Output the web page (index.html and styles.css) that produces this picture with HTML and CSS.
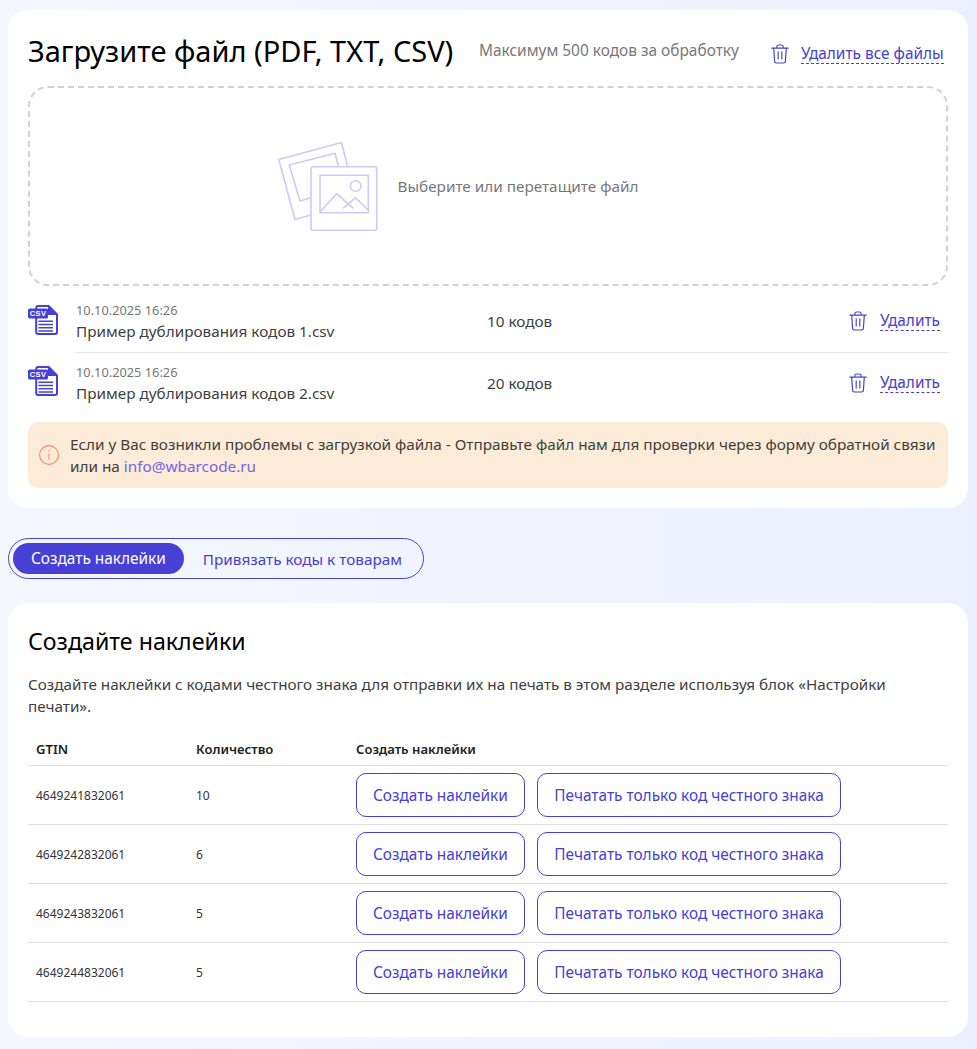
FILE: index.html
```html
<!DOCTYPE html>
<html lang="ru">
<head>
    <meta charset="UTF-8">
    <meta name="viewport" content="width=device-width, initial-scale=1.0">
    <title>Загрузка файла</title>
    <link rel="stylesheet" href="styles.css">
</head>
<body>
    <svg class="sprite" width="0" height="0" aria-hidden="true">
        <symbol id="trash" viewBox="0 0 20 22">
            <path d="M1 4.500h18M6.500 4.500V3a2 2 0 0 1 2-2h3a2 2 0 0 1 2 2v1.500M3 4.500l1 14.700a2 2 0 0 0 2 1.800h8a2 2 0 0 0 2-1.800l1-14.700M8 8.500v8M12 8.500v8" fill="none" stroke="currentColor" stroke-width="1.300" stroke-linecap="round" stroke-linejoin="round"/>
        </symbol>
        <symbol id="csv-doc" viewBox="0 0 30 30">
            <path d="M8.200 4V3a2 2 0 0 1 2-2h10.500l8.300 8.300V27a2 2 0 0 1-2 2H10.200a2 2 0 0 1-2-2V13" fill="none" stroke="currentColor" stroke-width="2"/>
            <path d="M20.500 1.500v8h8" fill="currentColor" stroke="currentColor" stroke-width="1.200"/>
            <rect x="0" y="3.500" width="20" height="10" rx="1.500" fill="currentColor"/>
            <path d="M10.500 16.200h14.500M10.500 19.500h14.500M10.500 22.800h14.500M10.500 26h14.500" stroke="currentColor" stroke-width="1.400"/>
        </symbol>
    </svg>

    <section class="card upload">
        <div class="upload-head">
            <h1>Загрузите файл (PDF, TXT, CSV)</h1>
            <span class="limit">Максимум 500 кодов за обработку</span>
            <a class="remove remove-all" href="#">
                <svg class="trash-icon"><use href="#trash"/></svg>
                <span>Удалить все файлы</span>
            </a>
        </div>

        <div class="dropzone">
            <svg class="drop-icon" width="100" height="91" viewBox="0 0 100 91" fill="none" stroke="#cbcbfa" stroke-width="1.600" stroke-linejoin="round">
                <path d="M33 74 L17 78.500 L0.800 18.500 L63.500 1.500 L69.500 25"/>
                <path d="M33 56.700 L22 60 L11.300 24 L57 12.300 L60.300 25"/>
                <rect x="33" y="25.700" width="65.700" height="63.600" rx="2"/>
                <rect x="42" y="34.300" width="48.300" height="37.400"/>
                <circle cx="77.700" cy="45" r="5.300"/>
                <path d="M42 71 L58.700 52.700 L75.300 67.300 M65 67.300 L77.700 56.700 L90.300 69.300"/>
            </svg>
            <span>Выберите или перетащите файл</span>
        </div>

        <div class="file-row">
            <svg class="csv-icon" viewBox="0 0 30 30"><use href="#csv-doc"/><text class="csv-label" x="10" y="11.300">CSV</text></svg>
            <div class="file-info">
                <div class="file-date">10.10.2025 16:26</div>
                <div class="file-name">Пример дублирования кодов 1.csv</div>
            </div>
            <div class="file-count">10 кодов</div>
            <a class="remove" href="#">
                <svg class="trash-icon"><use href="#trash"/></svg>
                <span>Удалить</span>
            </a>
        </div>
        <div class="file-row">
            <svg class="csv-icon" viewBox="0 0 30 30"><use href="#csv-doc"/><text class="csv-label" x="10" y="11.300">CSV</text></svg>
            <div class="file-info">
                <div class="file-date">10.10.2025 16:26</div>
                <div class="file-name">Пример дублирования кодов 2.csv</div>
            </div>
            <div class="file-count">20 кодов</div>
            <a class="remove" href="#">
                <svg class="trash-icon"><use href="#trash"/></svg>
                <span>Удалить</span>
            </a>
        </div>

        <div class="notice">
            <svg class="notice-icon" width="20" height="20" viewBox="0 0 20 20" fill="none" stroke="#f58a6c" stroke-width="1.100">
                <circle cx="10" cy="10" r="9.400"/>
                <path d="M10 8.500v6M10 5v1.500"/>
            </svg>
            <p>Если у Вас возникли проблемы с загрузкой файла - Отправьте файл нам для проверки через форму обратной связи или на <a href="#">info@wbarcode.ru</a></p>
        </div>
    </section>

    <div class="tabs">
        <button class="tab tab-active">Создать наклейки</button>
        <button class="tab">Привязать коды к товарам</button>
    </div>

    <section class="card stickers">
        <h2>Создайте наклейки</h2>
        <p class="lead">Создайте наклейки с кодами честного знака для отправки их на печать в этом разделе используя блок «Настройки печати».</p>
        <table>
            <thead>
                <tr><th>GTIN</th><th>Количество</th><th>Создать наклейки</th></tr>
            </thead>
            <tbody>
                <tr>
                    <td>4649241832061</td><td>10</td>
                    <td><button class="btn">Создать наклейки</button><button class="btn">Печатать только код честного знака</button></td>
                </tr>
                <tr>
                    <td>4649242832061</td><td>6</td>
                    <td><button class="btn">Создать наклейки</button><button class="btn">Печатать только код честного знака</button></td>
                </tr>
                <tr>
                    <td>4649243832061</td><td>5</td>
                    <td><button class="btn">Создать наклейки</button><button class="btn">Печатать только код честного знака</button></td>
                </tr>
                <tr>
                    <td>4649244832061</td><td>5</td>
                    <td><button class="btn">Создать наклейки</button><button class="btn">Печатать только код честного знака</button></td>
                </tr>
            </tbody>
        </table>
    </section>
</body>
</html>
```

FILE: styles.css
```css
* {
    box-sizing: border-box;
}
body {
    margin: 0;
    padding: 10px 9px 12px 8px;
    font-family: "Noto Sans", Arial, sans-serif;
    font-size: 15.3px;
    color: #404040;
    background-color: #eff1fe;
    background-image: linear-gradient(90deg, #f5f7ff, #eceffe);
}
.sprite {
    position: absolute;
}
.card {
    background: #fff;
    border-radius: 20px;
    padding: 20px;
}
.upload {
    height: 498px;
}
.upload-head {
    display: flex;
    height: 56px;
    align-items: flex-start;
}
h1 {
    margin: 0;
    width: 451px;
    font-size: 29px;
    line-height: 42px;
    font-weight: 400;
    color: #000;
}
.limit {
    color: #777;
    font-size: 15.450px;
    line-height: 41px;
    width: 292px;
}
.remove {
    display: flex;
    align-items: center;
    gap: 13px;
    color: #4640d4;
    font-size: 15.400px;
    text-decoration: none;
}
.remove span {
    border-bottom: 1px dashed #4640d4;
    line-height: 19px;
}
.remove-all {
    gap: 12px;
    margin-top: 14px;
}
.trash-icon {
    width: 18px;
    height: 20px;
}
.dropzone {
    height: 200px;
    border: 2px dashed #ced2dc;
    border-radius: 20px;
    display: flex;
    align-items: center;
    justify-content: center;
    gap: 20px;
    padding-right: 60px;
    color: #777;
}
.file-row {
    display: flex;
    align-items: center;
    height: 62px;
}
.dropzone + .file-row {
    margin-top: 4px;
}
.file-row + .file-row {
    border-top: 1px solid #e6e6ec;
    margin-left: 48px;
    padding-bottom: 2px;
}
.file-row + .file-row .csv-icon {
    margin-left: -48px;
}
.csv-icon {
    flex: none;
    width: 30px;
    height: 30px;
    margin-top: -3px;
    margin-right: 18px;
    color: #4640d4;
}
.csv-label {
    font-family: "Liberation Sans", Arial, sans-serif;
    font-size: 7.500px;
    font-weight: 700;
    letter-spacing: 0.4px;
    fill: #fff;
    text-anchor: middle;
}
.file-info {
    width: 411px;
    padding-top: 3px;
}
.file-date {
    font-size: 12.800px;
    color: #777;
    line-height: 18px;
}
.file-name {
    line-height: 25px;
}
.file-count {
    flex: 1;
}
.file-row .remove {
    margin-right: 8px;
}
.notice {
    display: flex;
    align-items: center;
    gap: 11px;
    background: #fcebd7;
    border-radius: 10px;
    padding: 11px;
    margin-top: 8px;
    height: 66px;
}
.notice p {
    margin: 0;
    line-height: 22px;
}
.notice a {
    color: #7564f0;
    text-decoration: none;
}
.notice-icon {
    flex: none;
}
.tabs {
    display: inline-flex;
    margin-top: 30px;
    padding: 4px;
    border: 1px solid #4640d4;
    border-radius: 21px;
    height: 41px;
    width: 416px;
    gap: 1px;
}
.tab {
    font: inherit;
    white-space: nowrap;
    border: 0;
    background: none;
    color: #4640d4;
    border-radius: 16px;
    padding: 0 18px;
    cursor: pointer;
}
.tab-active {
    background: #4640d4;
    color: #fff;
    font-size: 15.400px;
}
.stickers {
    margin-top: 24px;
    height: 434px;
}
h2 {
    margin: 0;
    font-size: 23.200px;
    font-weight: 400;
    line-height: 36px;
    color: #000;
}
.lead {
    margin: 14px 0 0;
    max-width: 880px;
    font-size: 15.250px;
    line-height: 22px;
}
table {
    width: 100%;
    border-collapse: collapse;
    margin-top: 16px;
}
th {
    text-align: left;
    font-size: 13.100px;
    font-weight: 600;
    color: #222;
    height: 32px;
    padding: 0 8px;
    border-bottom: 1px solid #e0e0e6;
}
td {
    font-size: 12px;
    color: #333;
    height: 59px;
    padding: 0 8px;
    border-bottom: 1px solid #e0e0e6;
}
td:nth-child(-n+2) {
    padding-top: 2px;
}
th:nth-child(1), td:nth-child(1) {
    width: 160px;
}
th:nth-child(2), td:nth-child(2) {
    width: 160px;
}
.btn {
    font: inherit;
    font-size: 15.400px;
    height: 44px;
    padding: 2px 16px 0;
    margin-right: 12px;
    background: #fff;
    color: #4640d4;
    border: 1px solid #4640d4;
    border-radius: 10px;
    cursor: pointer;
}
.btn + .btn {
    padding: 2px 16.500px 0;
}
```
